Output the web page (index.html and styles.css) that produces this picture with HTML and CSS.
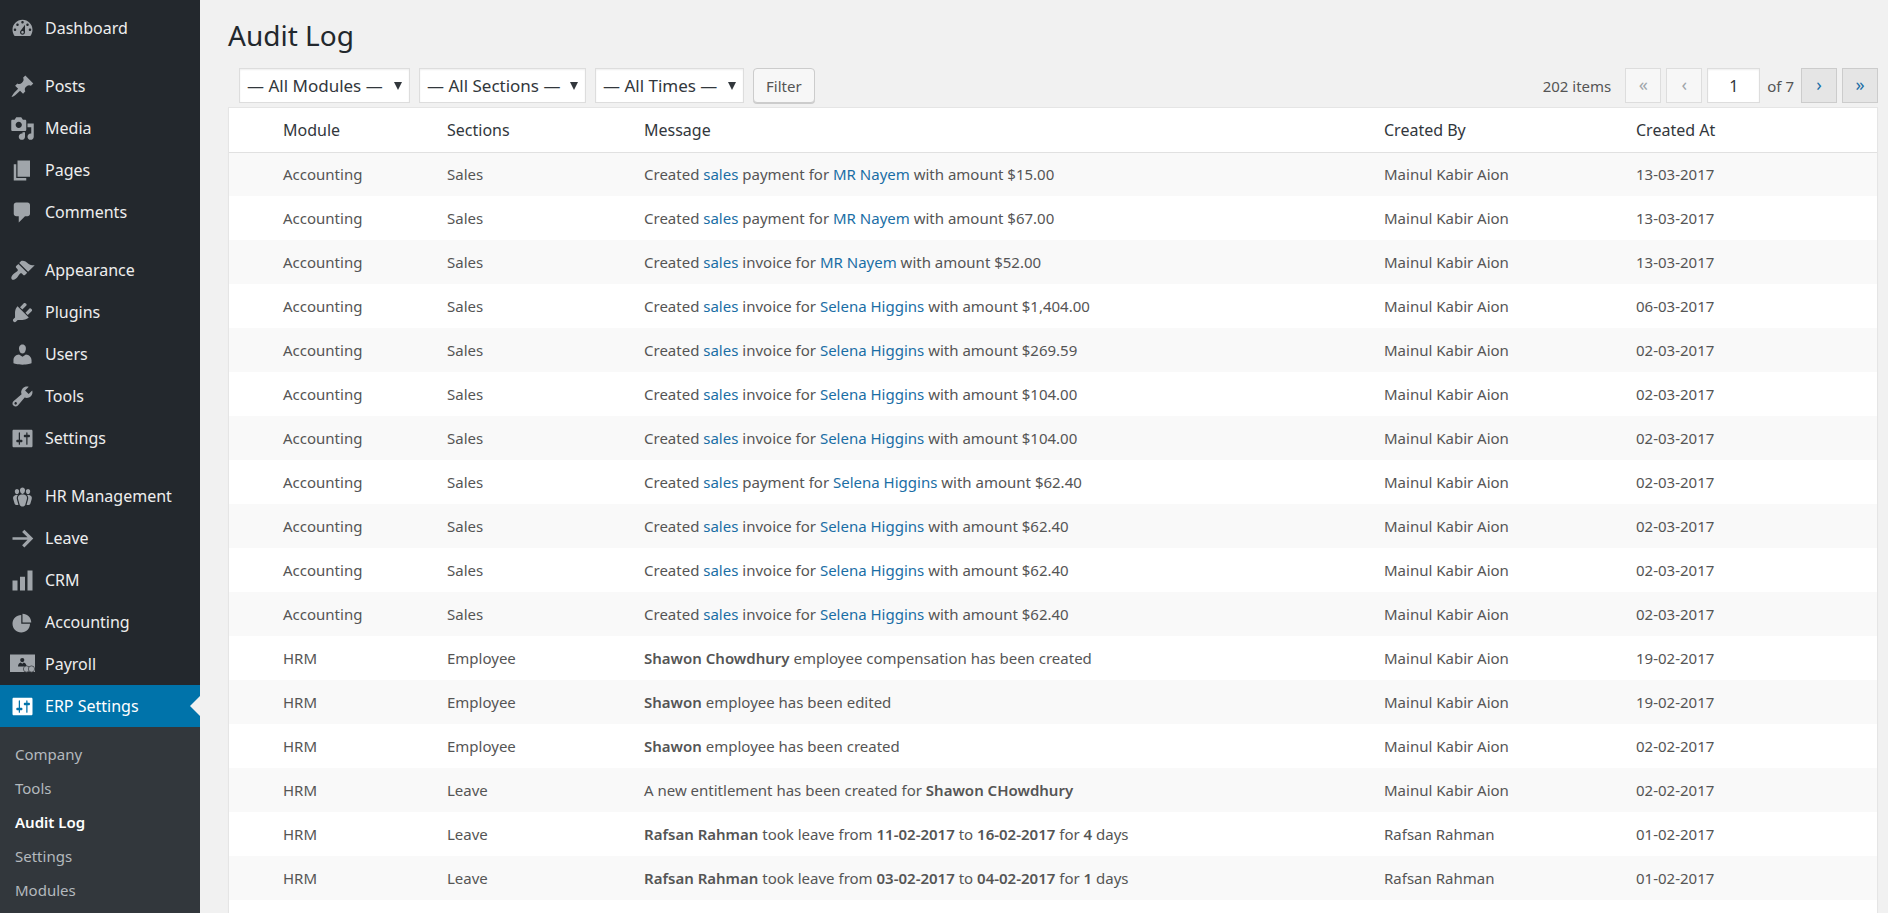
FILE: index.html
```html
<!DOCTYPE html>
<html lang="en">
<head>
    <meta charset="UTF-8">
    <meta name="viewport" content="width=device-width, initial-scale=1.0">
    <title>Audit Log</title>
    <link rel="stylesheet" href="styles.css">
</head>
<body>
    <nav class="sidebar">
        <ul class="menu">
            <li><a href="#"><svg viewBox="0 0 20 20"><path d="M3.76 16h12.48c1.1-1.37 1.76-3.11 1.76-5 0-4.42-3.58-8-8-8s-8 3.58-8 8c0 1.89.66 3.63 1.76 5zM10 4c.55 0 1 .45 1 1s-.45 1-1 1-1-.45-1-1 .45-1 1-1zM6 6c.55 0 1 .45 1 1s-.45 1-1 1-1-.45-1-1 .45-1 1-1zm8 0c.55 0 1 .45 1 1s-.45 1-1 1-1-.45-1-1 .45-1 1-1zm-5.37 5.55L12 7v6c0 1.1-.9 2-2 2s-2-.9-2-2c0-.57.24-1.08.63-1.45zM4 10c.55 0 1 .45 1 1s-.45 1-1 1-1-.45-1-1 .45-1 1-1zm12 0c.55 0 1 .45 1 1s-.45 1-1 1-1-.45-1-1 .45-1 1-1zm-5 3c0-.55-.45-1-1-1s-1 .45-1 1 .45 1 1 1 1-.45 1-1z"/></svg>Dashboard</a></li>
            <li class="separator"></li>
            <li><a href="#"><svg viewBox="0 0 20 20"><path d="M10.44 3.02l1.82-1.82 6.36 6.35-1.83 1.82c-1.05-.68-2.48-.57-3.41.36l-.75.75c-.92.93-1.04 2.35-.35 3.41l-1.83 1.82-2.41-2.41-2.8 2.79c-.42.42-3.38 2.71-3.8 2.29s1.86-3.39 2.28-3.81l2.79-2.79L4.1 9.36l1.83-1.82c1.05.69 2.48.57 3.4-.36l.75-.75c.93-.92 1.05-2.35.36-3.41z"/></svg>Posts</a></li>
            <li><a href="#"><svg viewBox="0 0 20 20"><path d="M13 11V4c0-.55-.45-1-1-1h-1.67L9 1H5L3.67 3H2c-.55 0-1 .45-1 1v7c0 .55.45 1 1 1h10c.55 0 1-.45 1-1zM7 4.5c1.38 0 2.5 1.12 2.5 2.5S8.38 9.5 7 9.5 4.5 8.38 4.5 7 5.62 4.5 7 4.5zM14 6h5v10.5c0 1.38-1.12 2.5-2.5 2.5S14 17.88 14 16.5s1.12-2.5 2.5-2.5c.17 0 .34.02.5.05V9h-3V6zm-4 8.05V13h2v3.5c0 1.38-1.12 2.5-2.5 2.5S7 17.88 7 16.5 8.12 14 9.5 14c.17 0 .34.02.5.05z"/></svg>Media</a></li>
            <li><a href="#"><svg viewBox="0 0 20 20"><path d="M6 15V2h10v13H6zm-1 1h8v2H3V5h2v11z"/></svg>Pages</a></li>
            <li><a href="#"><svg viewBox="0 0 20 20"><path d="M5 2h9c1.1 0 2 .9 2 2v7c0 1.1-.9 2-2 2h-2l-5 5v-5H5c-1.1 0-2-.9-2-2V4c0-1.1.9-2 2-2z"/></svg>Comments</a></li>
            <li class="separator"></li>
            <li><a href="#"><svg viewBox="0 0 20 20"><path d="M14.48 11.06L7.41 3.99l1.5-1.5c.5-.56 2.3-.47 3.51.32 1.21.8 1.43 1.28 2.91 2.1 1.18.64 2.45 1.26 4.45.85zm-.71.71L6.7 4.7 4.93 6.47c-.39.39-.39 1.02 0 1.41l1.06 1.06c.39.39.39 1.03 0 1.42-.6.6-1.43 1.11-2.21 1.69-.35.26-.7.53-1.01.84C1.43 14.23.4 16.08 1.4 17.07c.99 1 2.84-.03 4.18-1.36.31-.31.58-.66.85-1.02.57-.78 1.08-1.61 1.69-2.21.39-.39 1.02-.39 1.41 0l1.06 1.06c.39.39 1.02.39 1.41 0z"/></svg>Appearance</a></li>
            <li><a href="#"><svg viewBox="0 0 20 20"><path d="M13.11 4.36L9.87 7.6 8 5.73l3.24-3.24c.35-.34 1.05-.2 1.56.32.52.51.66 1.21.31 1.55zm-8 1.77l.91-1.12 9.01 9.01-1.19.84c-.71.71-2.63 1.16-3.82 1.16H6.14L4.9 17.26c-.59.59-1.54.59-2.12 0-.59-.58-.59-1.53 0-2.12l1.24-1.24v-3.88c0-1.13.4-3.19 1.09-3.89zm7.26 3.97l3.24-3.24c.34-.35 1.04-.21 1.55.31.52.51.66 1.21.31 1.55l-3.24 3.25z"/></svg>Plugins</a></li>
            <li><a href="#"><svg viewBox="0 0 20 20"><path d="M10 9.25c-2.27 0-2.73-3.44-2.73-3.44C7 4.02 7.82 2 9.97 2c2.16 0 2.98 2.02 2.71 3.81 0 0-.41 3.44-2.68 3.44zm0 2.57L12.72 10c2.39 0 4.52 2.33 4.52 4.53v2.49s-3.65 1.13-7.24 1.13c-3.65 0-7.24-1.13-7.24-1.13v-2.49c0-2.25 1.94-4.48 4.47-4.48z"/></svg>Users</a></li>
            <li><a href="#"><svg viewBox="0 0 20 20"><path d="M16.68 9.77c-1.34 1.34-3.3 1.67-4.95.99l-5.41 6.52c-.99.99-2.59.99-3.58 0s-.99-2.59 0-3.57l6.52-5.42c-.68-1.65-.35-3.61.99-4.95 1.28-1.28 3.12-1.62 4.72-1.06l-2.89 2.89 2.82 2.82 2.86-2.87c.53 1.58.18 3.39-1.08 4.65zM3.81 16.21c.4.39 1.04.39 1.43 0 .4-.4.4-1.04 0-1.43-.39-.4-1.03-.4-1.43 0-.39.39-.39 1.03 0 1.43z"/></svg>Tools</a></li>
            <li><a href="#"><svg viewBox="0 0 20 20"><path d="M18 16V4c0-.55-.45-1-1-1H3c-.55 0-1 .45-1 1v12c0 .55.45 1 1 1h14c.55 0 1-.45 1-1zM8 11h1c.55 0 1 .45 1 1s-.45 1-1 1H8v1.5c0 .28-.22.5-.5.5s-.5-.22-.5-.5V13H6c-.55 0-1-.45-1-1s.45-1 1-1h1V5.5c0-.28.22-.5.5-.5s.5.22.5.5V11zm5-2h-1c-.55 0-1-.45-1-1s.45-1 1-1h1V5.5c0-.28.22-.5.5-.5s.5.22.5.5V7h1c.55 0 1 .45 1 1s-.45 1-1 1h-1v5.5c0 .28-.22.5-.5.5s-.5-.22-.5-.5V9z"/></svg>Settings</a></li>
            <li class="separator"></li>
            <li><a href="#"><svg viewBox="0 0 20 20"><path d="M8.03 4.46c-.29 1.28.55 3.46 1.97 3.46 1.41 0 2.25-2.18 1.96-3.46-.22-.98-1.08-1.63-1.96-1.63-.89 0-1.74.65-1.97 1.63zm-4.13.9c-.25 1.08.47 2.93 1.67 2.93s1.92-1.85 1.67-2.93c-.19-.83-.92-1.39-1.67-1.39s-1.48.56-1.67 1.39zm8.86 0c-.25 1.08.47 2.93 1.66 2.93 1.2 0 1.92-1.85 1.67-2.93-.19-.83-.92-1.39-1.67-1.39-.74 0-1.47.56-1.66 1.39zm-.59 11.43l1.25-4.3C14.2 10 12.71 8.47 10 8.47c-2.72 0-4.21 1.53-3.44 4.02l1.26 4.3C8.05 17.51 9 18 10 18c.98 0 1.94-.49 2.17-1.21zm-6.1-7.63c-.49.67-.96 1.83-.42 3.59l1.12 3.79c-.34.2-.77.31-1.2.31-.85 0-1.65-.41-1.85-1.03l-1.07-3.65c-.65-2.11.61-3.4 2.92-3.4.27 0 .54.02.79.06-.1.1-.2.22-.29.33zm8.35-.39c2.31 0 3.58 1.29 2.92 3.4l-1.07 3.65c-.2.62-1 1.03-1.85 1.03-.43 0-.86-.11-1.2-.31l1.11-3.77c.55-1.78.08-2.94-.42-3.61-.08-.11-.18-.23-.28-.33.25-.04.51-.06.79-.06z"/></svg>HR Management</a></li>
            <li><a href="#"><svg viewBox="0 0 20 20"><path d="M2 9h12l-4.3-4.3 1.8-1.8L18.6 10l-7.1 7.1-1.8-1.8L14 11H2z"/></svg>Leave</a></li>
            <li><a href="#"><svg viewBox="0 0 20 20"><path d="M18 18V2h-4v16h4zm-6 0V7H8v11h4zm-6 0v-8H2v8h4z"/></svg>CRM</a></li>
            <li><a href="#"><svg viewBox="0 0 20 20"><path d="M10 10V3c3.87 0 7 3.13 7 7h-7zM9 4v7h7c0 3.87-3.13 7-7 7s-7-3.13-7-7 3.13-7 7-7z"/></svg>Accounting</a></li>
            <li><a href="#"><svg viewBox="0 0 20 20"><path d="M0 2h20v14H0z"/><circle class="cut" cx="9.8" cy="6.4" r="1.7"/><path class="cut" d="M6.4 11.6c0-2 1-3 2.2-3.3l1.2 1 1.2-1c1.2.3 2.2 1.3 2.2 3.3z"/><circle class="coin" cx="13.2" cy="13.6" r="2.5"/><circle class="coin" cx="17.2" cy="13.6" r="2.5"/></svg>Payroll</a></li>
            <li class="current">
                <a href="#"><svg viewBox="0 0 20 20"><path d="M18 16V4c0-.55-.45-1-1-1H3c-.55 0-1 .45-1 1v12c0 .55.45 1 1 1h14c.55 0 1-.45 1-1zM8 11h1c.55 0 1 .45 1 1s-.45 1-1 1H8v1.5c0 .28-.22.5-.5.5s-.5-.22-.5-.5V13H6c-.55 0-1-.45-1-1s.45-1 1-1h1V5.5c0-.28.22-.5.5-.5s.5.22.5.5V11zm5-2h-1c-.55 0-1-.45-1-1s.45-1 1-1h1V5.5c0-.28.22-.5.5-.5s.5.22.5.5V7h1c.55 0 1 .45 1 1s-.45 1-1 1h-1v5.5c0 .28-.22.5-.5.5s-.5-.22-.5-.5V9z"/></svg>ERP Settings</a>
            </li>
        </ul>
        <ul class="submenu">
            <li><a href="#">Company</a></li>
            <li><a href="#">Tools</a></li>
            <li><a href="#" class="active">Audit Log</a></li>
            <li><a href="#">Settings</a></li>
            <li><a href="#">Modules</a></li>
        </ul>
    </nav>

    <main class="content">
        <h1>Audit Log</h1>

        <div class="toolbar">
            <form class="filters">
                <div class="select modules">
                    <select aria-label="Modules">
                        <option>— All Modules —</option>
                    </select>
                </div>
                <div class="select sections">
                    <select aria-label="Sections">
                        <option>— All Sections —</option>
                    </select>
                </div>
                <div class="select times">
                    <select aria-label="Times">
                        <option>— All Times —</option>
                    </select>
                </div>
                <button type="button" class="filter-button">Filter</button>
            </form>

            <div class="pagination">
                <span class="total">202 items</span>
                <button type="button" disabled aria-label="First page">«</button>
                <button type="button" disabled aria-label="Previous page">‹</button>
                <input type="text" value="1" aria-label="Current page">
                <span class="pages">of 7</span>
                <button type="button" aria-label="Next page">›</button>
                <button type="button" aria-label="Last page">»</button>
            </div>
        </div>

        <div class="log">
            <table>
                <colgroup>
                    <col class="col-module">
                    <col class="col-section">
                    <col>
                    <col class="col-by">
                    <col class="col-at">
                </colgroup>
                <thead>
                    <tr><th>Module</th><th>Sections</th><th>Message</th><th>Created By</th><th>Created At</th></tr>
                </thead>
                <tbody>
                    <tr><td>Accounting</td><td>Sales</td><td>Created <a href="#">sales</a> payment for <a href="#">MR Nayem</a> with amount $15.00</td><td>Mainul Kabir Aion</td><td>13-03-2017</td></tr>
                    <tr><td>Accounting</td><td>Sales</td><td>Created <a href="#">sales</a> payment for <a href="#">MR Nayem</a> with amount $67.00</td><td>Mainul Kabir Aion</td><td>13-03-2017</td></tr>
                    <tr><td>Accounting</td><td>Sales</td><td>Created <a href="#">sales</a> invoice for <a href="#">MR Nayem</a> with amount $52.00</td><td>Mainul Kabir Aion</td><td>13-03-2017</td></tr>
                    <tr><td>Accounting</td><td>Sales</td><td>Created <a href="#">sales</a> invoice for <a href="#">Selena Higgins</a> with amount $1,404.00</td><td>Mainul Kabir Aion</td><td>06-03-2017</td></tr>
                    <tr><td>Accounting</td><td>Sales</td><td>Created <a href="#">sales</a> invoice for <a href="#">Selena Higgins</a> with amount $269.59</td><td>Mainul Kabir Aion</td><td>02-03-2017</td></tr>
                    <tr><td>Accounting</td><td>Sales</td><td>Created <a href="#">sales</a> invoice for <a href="#">Selena Higgins</a> with amount $104.00</td><td>Mainul Kabir Aion</td><td>02-03-2017</td></tr>
                    <tr><td>Accounting</td><td>Sales</td><td>Created <a href="#">sales</a> invoice for <a href="#">Selena Higgins</a> with amount $104.00</td><td>Mainul Kabir Aion</td><td>02-03-2017</td></tr>
                    <tr><td>Accounting</td><td>Sales</td><td>Created <a href="#">sales</a> payment for <a href="#">Selena Higgins</a> with amount $62.40</td><td>Mainul Kabir Aion</td><td>02-03-2017</td></tr>
                    <tr><td>Accounting</td><td>Sales</td><td>Created <a href="#">sales</a> invoice for <a href="#">Selena Higgins</a> with amount $62.40</td><td>Mainul Kabir Aion</td><td>02-03-2017</td></tr>
                    <tr><td>Accounting</td><td>Sales</td><td>Created <a href="#">sales</a> invoice for <a href="#">Selena Higgins</a> with amount $62.40</td><td>Mainul Kabir Aion</td><td>02-03-2017</td></tr>
                    <tr><td>Accounting</td><td>Sales</td><td>Created <a href="#">sales</a> invoice for <a href="#">Selena Higgins</a> with amount $62.40</td><td>Mainul Kabir Aion</td><td>02-03-2017</td></tr>
                    <tr><td>HRM</td><td>Employee</td><td><strong>Shawon Chowdhury</strong> employee compensation has been created</td><td>Mainul Kabir Aion</td><td>19-02-2017</td></tr>
                    <tr><td>HRM</td><td>Employee</td><td><strong>Shawon</strong> employee has been edited</td><td>Mainul Kabir Aion</td><td>19-02-2017</td></tr>
                    <tr><td>HRM</td><td>Employee</td><td><strong>Shawon</strong> employee has been created</td><td>Mainul Kabir Aion</td><td>02-02-2017</td></tr>
                    <tr><td>HRM</td><td>Leave</td><td>A new entitlement has been created for <strong>Shawon CHowdhury</strong></td><td>Mainul Kabir Aion</td><td>02-02-2017</td></tr>
                    <tr><td>HRM</td><td>Leave</td><td><strong>Rafsan Rahman</strong> took leave from <strong>11-02-2017</strong> to <strong>16-02-2017</strong> for <strong>4</strong> days</td><td>Rafsan Rahman</td><td>01-02-2017</td></tr>
                    <tr><td>HRM</td><td>Leave</td><td><strong>Rafsan Rahman</strong> took leave from <strong>03-02-2017</strong> to <strong>04-02-2017</strong> for <strong>1</strong> days</td><td>Rafsan Rahman</td><td>01-02-2017</td></tr>
                </tbody>
            </table>
        </div>
    </main>
</body>
</html>
```
FILE: styles.css
```css
* {
    box-sizing: border-box;
}
body {
    margin: 0;
    display: flex;
    min-height: 100vh;
    background-color: #f1f1f1;
    color: #555;
    font-family: "Noto Sans", "Open Sans", sans-serif;
    font-size: 15px;
}
a {
    color: #1a6ea5;
    text-decoration: none;
}

/* Sidebar */
.sidebar {
    display: flex;
    flex-direction: column;
    flex: none;
    width: 200px;
    background-color: #23282d;
}
.menu,
.submenu {
    list-style: none;
    margin: 0;
    padding: 0;
}
.menu {
    padding-top: 7px;
}
.menu a {
    display: flex;
    align-items: center;
    gap: 10px;
    height: 42px;
    padding-left: 10px;
    color: #eee;
    font-size: 16px;
}
.menu svg {
    width: 25px;
    height: 25px;
    fill: #a0a5aa;
}
.menu .cut {
    fill: #23282d;
}
.menu .coin {
    stroke: #23282d;
    stroke-width: 0.5;
}
.separator {
    height: 16px;
}
.menu .current {
    position: relative;
    background-color: #0073aa;
}
.menu .current a {
    color: #fff;
}
.menu .current svg {
    fill: #fff;
}
.current::after {
    content: "";
    position: absolute;
    right: 0;
    top: 11px;
    border: 10px solid transparent;
    border-left: none;
    border-right-color: #f1f1f1;
}
.submenu {
    flex: 1;
    padding-top: 10px;
    background-color: #32373c;
}
.submenu a {
    display: block;
    padding-left: 15px;
    line-height: 34px;
    color: #b4b9be;
}
.submenu .active {
    color: #fff;
    font-weight: 600;
}

/* Content */
.content {
    display: flex;
    flex-direction: column;
    flex: 1;
    padding: 15px 10px 0 28px;
}
h1 {
    margin: 0;
    color: #23282d;
    font-size: 28px;
    font-weight: 400;
    line-height: 40px;
}
.toolbar {
    display: flex;
    justify-content: space-between;
    align-items: center;
    margin-top: 13px;
    padding-bottom: 4px;
}
.filters,
.pagination {
    display: flex;
    align-items: center;
}
.filters {
    gap: 9px;
    padding-left: 11px;
}
.select {
    position: relative;
}
.select::after {
    content: "";
    position: absolute;
    right: 8px;
    top: 14px;
    border: 4px solid transparent;
    border-top: 8px solid #32373c;
    border-bottom: none;
    pointer-events: none;
}
.modules {
    width: 171px;
}
.sections {
    width: 167px;
}
.times {
    width: 149px;
}
select,
.pagination input {
    height: 35px;
    border: 1px solid #ddd;
    border-radius: 0;
    background-color: #fff;
    box-shadow: inset 0 1px 2px rgba(0, 0, 0, 0.07);
    color: #32373c;
    font-family: inherit;
    font-size: 17px;
}
select {
    appearance: none;
    width: 100%;
    padding: 0 7px;
}
.filter-button {
    height: 35px;
    padding: 0 12px;
    border: 1px solid #ccc;
    border-radius: 4px;
    background-color: #f7f7f7;
    box-shadow: 0 1px 0 #ccc;
    color: #555;
    font-family: inherit;
    font-size: 15px;
}
.pagination {
    gap: 5px;
}
.total {
    margin-right: 9px;
}
.pages {
    margin: 0 2px;
}
.pagination button {
    width: 36px;
    height: 35px;
    padding: 0 0 4px;
    border: 1px solid #ccc;
    background-color: #e5e5e5;
    color: #1a6ea5;
    font-family: inherit;
    font-size: 18px;
    line-height: 20px;
}
.pagination button:disabled {
    border-color: #ddd;
    background-color: #f7f7f7;
    color: #a0a5aa;
}
.pagination input {
    width: 53px;
    padding: 0;
    font-size: 16px;
    text-align: center;
}

/* Log table */
.log {
    flex: 1;
    border: 1px solid #e5e5e5;
    border-bottom: none;
    background-color: #fff;
    box-shadow: 0 1px 1px rgba(0, 0, 0, 0.04);
}
table {
    width: 100%;
    border-collapse: collapse;
    table-layout: fixed;
}
.col-module {
    width: 208px;
}
.col-section {
    width: 197px;
}
.col-by {
    width: 252px;
}
.col-at {
    width: 251px;
}
th,
td {
    height: 44px;
    padding: 0 10px;
    text-align: left;
}
th {
    border-bottom: 1px solid #e1e1e1;
    color: #32373c;
    font-size: 16px;
    font-weight: 400;
}
th:first-child,
td:first-child {
    padding-left: 54px;
}
tbody tr:nth-child(odd) {
    background-color: #f9f9f9;
}
strong {
    font-weight: 600;
}
```
